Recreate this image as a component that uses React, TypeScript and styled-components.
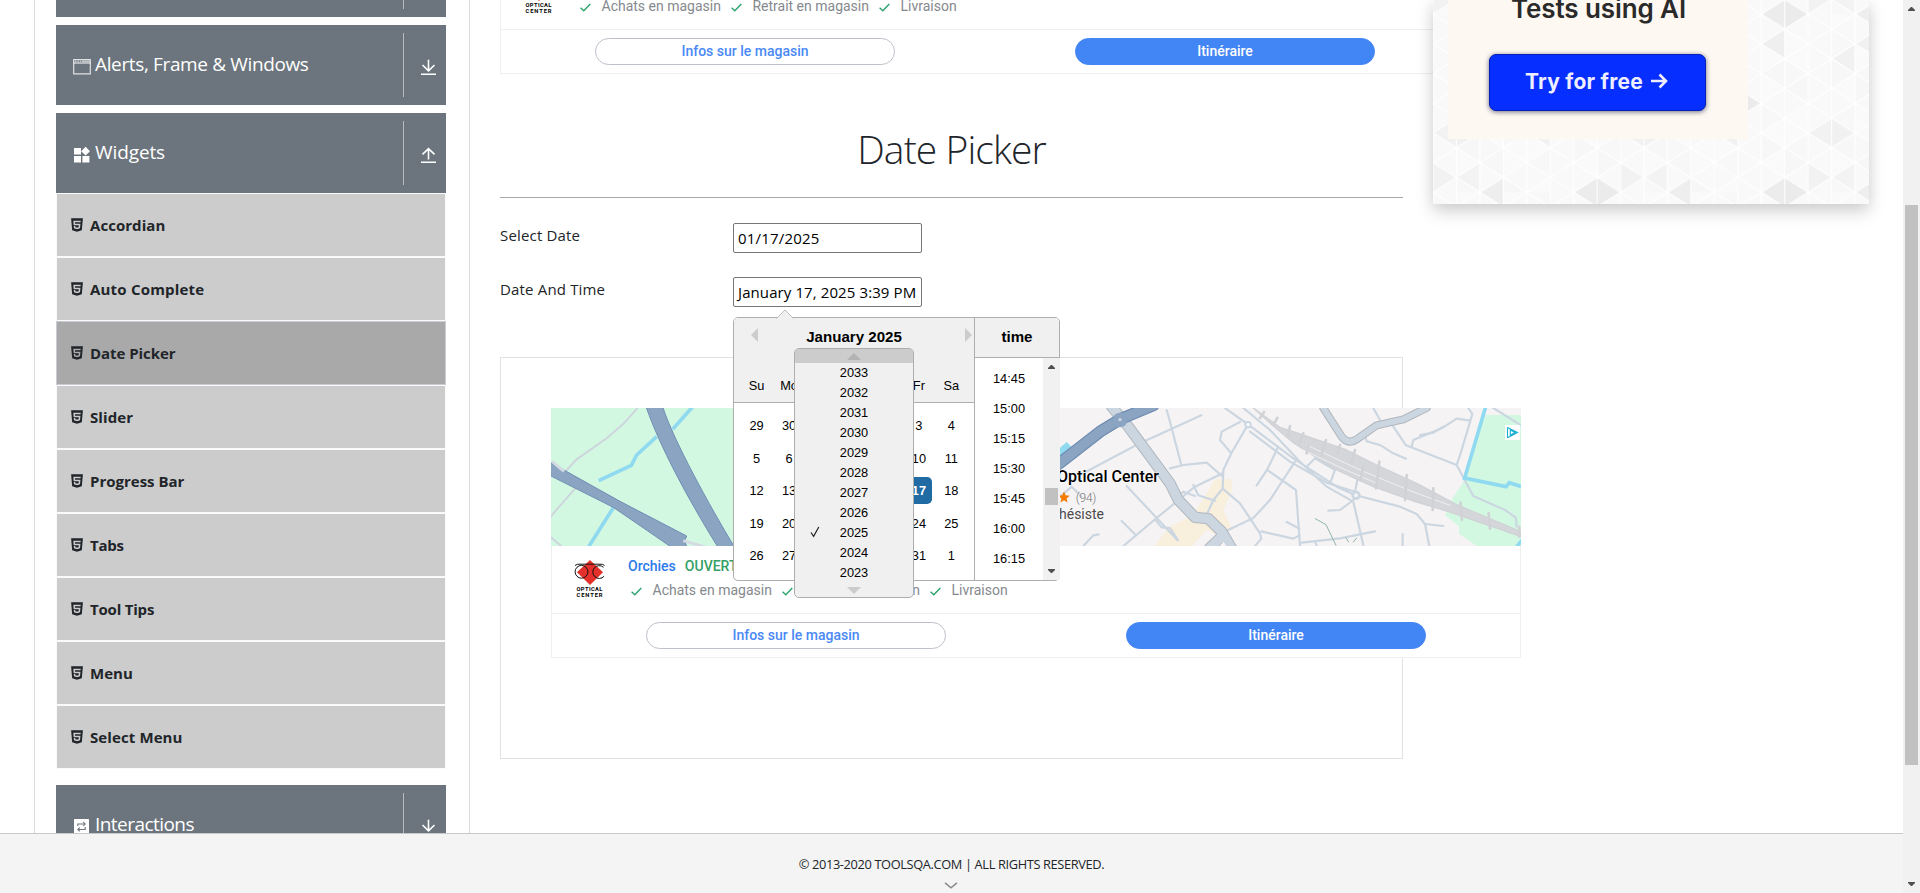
import React from "react";
import styled, { createGlobalStyle } from "styled-components";

const GlobalStyle = createGlobalStyle`
  * { box-sizing: border-box; }
  body { margin: 0; background: #fff; color: #212529; font-family: "Open Sans", "Noto Sans", sans-serif; overflow: hidden; }
`;

const Screen = styled.div`display: flex; width: 1920px; height: 893px; overflow: hidden;`;
const Page = styled.div`display: flex; flex-direction: column; width: 1903px; height: 893px;`;
const Content = styled.div`display: flex; height: 833px; overflow: hidden;`;

/* ---------- window scroll bar ---------- */
const Bar = styled.div<{ $pad: number }>`
  display: flex; flex-direction: column; justify-content: space-between; align-items: center;
  width: 17px; padding: ${(p) => p.$pad}px 0; background: #f1f1f1; flex: none;
`;
const Thumb = styled.div<{ $h: number; $top: number }>`
  width: 13px; height: ${(p) => p.$h}px; margin: ${(p) => p.$top}px 0 auto; background: #c1c1c1;
`;
const Tip = styled.svg`display: block; width: 7px; height: 4px; fill: #505050; flex: none;`;
const TipUp = () => <Tip viewBox="0 0 7 4"><path d="M3 0h1l3 3v1H0V3z" /></Tip>;
const TipDown = () => <Tip viewBox="0 0 7 4"><path d="M0 0h7v1L4 4H3L0 1z" /></Tip>;

/* ---------- left navigation ---------- */
const Sidebar = styled.nav`
  width: 436px; margin-left: 34px; padding: 0 23px 0 21px; flex: none;
  border: solid #dcdcdc; border-width: 0 1px;
`;
const GroupHeader = styled.div<{ $mt: number }>`
  display: flex; align-items: center; height: 80px; margin-top: ${(p) => p.$mt}px;
  padding-left: 17px; background: #6c757d; color: #fff;
`;
const GroupIcon = styled.svg`width: 18px; height: 18px; margin: 3px 4px 0 0; display: block;`;
const GroupName = styled.span<{ $ls: number }>`
  flex: 1; font-size: 19px; line-height: 30px; margin-top: -2px; letter-spacing: ${(p) => p.$ls}px;
`;
const Toggle = styled.div`
  display: flex; justify-content: center; align-items: center; height: 64px; width: 43px;
  border-left: 1px solid #b6bbbf; padding: 4px 0 0 6px;
`;
const ToggleIcon = styled.svg`width: 15px; height: 16px; fill: none; stroke: #fff; stroke-width: 1.6;`;
const List = styled.ul`list-style: none; margin: 0; padding: 0;`;
const Item = styled.li<{ $active?: boolean }>`
  display: flex; align-items: center; height: 64px; padding-left: 11px;
  border: 1px solid ${(p) => (p.$active ? "#c9ccd2" : "#fafafa")};
  background: ${(p) => (p.$active ? "#a9a9a9" : "#ccc")};
`;
const ItemIcon = styled.svg`width: 18px; height: 18px; fill: #212529; margin-right: 4px; display: block;`;
const ItemName = styled.span<{ $ls: number }>`
  font-size: 15px; font-weight: 700; line-height: 24px; letter-spacing: ${(p) => p.$ls}px;
`;

const Html5 = () => (
  <ItemIcon viewBox="0 0 24 24">
    <path fillRule="evenodd" d="M4.136 3.012h15.729l-1.431 16.15-6.451 1.826-6.414-1.826zm5.266 7.302-.173-1.963 7.581.002.173-1.973-9.931-.002.522 5.909h6.835l-.243 2.566-2.179.602-2.214-.605-.141-1.58H7.67l.248 3.123L12 17.506l4.017-1.113.552-6.079z" />
  </ItemIcon>
);
const WindowIcon = () => (
  <GroupIcon viewBox="0 0 18 18">
    <path d="M.7 1.700h16.600v14.100H.7z" fill="none" stroke="#dfe1e3" strokeWidth="1.200" />
    <path d="M.5 5h17" stroke="#fff" strokeWidth="1" />
    <path d="M2 3.200h1.400M4.400 3.200h1.400M6.800 3.200h1.400M9 3.200h8" stroke="#c5c9cc" strokeWidth="1.600" />
  </GroupIcon>
);
const WidgetsIcon = () => (
  <GroupIcon viewBox="0 0 18 18" fill="#fff">
    <path d="M1 2h7v6.600H1zM1 10h7v6.600H1zM9.400 10h7v6.600h-7zM12.600.8l4.400 4.400-4.400 4.400-4.400-4.400z" />
  </GroupIcon>
);
const RepeatIcon = () => (
  <GroupIcon viewBox="0 0 18 18">
    <rect x="1" y="1" width="15" height="15" rx=".6" fill="#fff" />
    <g fill="none" stroke="#6c757d" strokeWidth="1.100">
      <path d="M4.800 8V6h6.600M12.200 9v2.500H5.600" />
      <path d="M10.200 4.200l2 1.800-2 1.800M6.800 9.700l-2 1.800 2 1.800" />
    </g>
  </GroupIcon>
);
const DownIcon = () => <ToggleIcon viewBox="0 0 15 16"><path d="M7.500.8v11M1.500 6l6 5.800 6-5.800M0 15.200h15" /></ToggleIcon>;
const UpIcon = () => <ToggleIcon viewBox="0 0 15 16"><path d="M7.500 12.400V1.700M1.500 7.400l6-5.800 6 5.800M0 15.200h15" /></ToggleIcon>;

/* ---------- main column ---------- */
const Main = styled.main`width: 903px; margin-left: 30px; flex: none;`;
const TopAd = styled.div`margin-top: -176px; height: 250px;`;
const Title = styled.h1`
  margin: 42px 0 0; height: 81px; line-height: 66px; text-align: center; font-size: 39px; font-weight: 300;
  letter-spacing: -0.9px;
`;
const Rule = styled.hr`margin: 0 0 25px; border: 0; border-top: 1px solid #a8a8a8;`;
const Field = styled.div`display: flex; height: 30px; margin-bottom: 24px;`;
const Label = styled.label`width: 233px; font-size: 15px; line-height: 25px; letter-spacing: 0.170px;`;
const InputWrap = styled.div`position: relative;`;
const Input = styled.div<{ $ls: number }>`
  width: 189px; height: 30px; border: 1px solid #767676; border-radius: 2px; padding-left: 4px;
  font-size: 15px; line-height: 29px; color: #000; white-space: nowrap; background: #fff; letter-spacing: ${(p) => p.$ls}px;
`;
const Frame = styled.div`height: 402px; margin-top: 50px; padding: 50px 0 0 50px; border: 1px solid #e2e2e2;`;

/* ---------- store advert ---------- */
const Advert = styled.section`
  position: relative; width: 970px; height: 250px; font-family: Roboto, sans-serif; font-size: 14px; background: #fff;
`;
const MapArea = styled.div`position: relative; height: 138px;`;
const MapSvg = styled.svg`display: block; width: 970px; height: 138px;`;
const MapText = styled.div`
  position: absolute; left: 460px; top: 58px; width: 148px; display: flex; flex-direction: column; align-items: flex-end;
`;
const StoreName = styled.div`font-size: 16px; font-weight: 500; line-height: 22px; color: #000; text-shadow: 0 0 2px #fff, 0 0 2px #fff;`;
const Rating = styled.div`
  display: flex; align-items: center; gap: 6px; margin-right: 63px; height: 18px; font-size: 12.500px; font-weight: 300; color: #777;
  letter-spacing: -0.4px; text-shadow: 0 0 2px #fff;
`;
const Kind = styled.div`line-height: 17px; margin-right: 55px; color: #4a4a4a; white-space: nowrap; text-shadow: 0 0 2px #fff;`;
const Badge = styled.svg`position: absolute; right: 1px; top: 17px; width: 15px; height: 15px;`;
const Info = styled.div`display: flex; height: 67px; border: solid #efefef; border-width: 0 1px; padding: 13px 0 0 22px;`;
const LogoBox = styled.svg`width: 31px; height: 38px; margin: 1px 23px 0 0; flex: none;`;
const InfoText = styled.div`display: flex; flex-direction: column;`;
const StatusLine = styled.div`display: flex; gap: 9px; line-height: 14px; font-weight: 500; margin-bottom: 10px;`;
const City = styled.span`color: #2c7bea;`;
const Open = styled.span`color: #34a065;`;
const Services = styled.div`display: flex; align-items: center; line-height: 14px; color: #85898e; padding-left: 3px;`;
const Service = styled.span`display: flex; align-items: center; gap: 10.500px; margin-right: 10px; white-space: nowrap;`;
const Tick = styled.svg`width: 11px; height: 9px; margin-top: 2px; fill: none; stroke: #2ba36f; stroke-width: 1.400;`;
const Actions = styled.div`
  display: grid; grid-template-columns: 490px 478px; height: 45px; border: 1px solid #efefef; padding-top: 8px;
`;
const Pill = styled.div<{ $solid?: boolean }>`
  width: 300px; height: 27px; margin-left: ${(p) => (p.$solid ? 84 : 94)}px; border-radius: 14px; text-align: center;
  border: 1px solid ${(p) => (p.$solid ? "#4285f4" : "#bdc1c9")}; line-height: 25px;
  color: ${(p) => (p.$solid ? "#fff" : "#4a89f5")}; background: ${(p) => (p.$solid ? "#4285f4" : "#fff")};
  font-weight: 500;
`;

const StoreMap = () => (
  <MapSvg viewBox="0 0 970 138">
    <rect width="970" height="138" fill="#f5f3f4" />
    <rect width="330" height="138" fill="#d3f8e2" />
    <g transform="scale(.33333) translate(-213 -204)" fill="none">
      <path d="M474 202L432 250 380 295 290 358 255 396M290 440L210 532M208 588L246 620" stroke="#cdd5dd" strokeWidth="6" />
      <path d="M640 198L578 268M530 290L470 345 454 376 356 422M402 500L326 620" stroke="#8fdaf0" strokeWidth="11" strokeLinejoin="round" />
      <path d="M498 200C540 320 620 470 714 622L764 622C690 500 580 300 548 200z" fill="#8aa4c2" stroke="#6f8db3" strokeWidth="3" />
      <path d="M205 364L420 484 620 588 615 600 620 622 575 622 400 502 205 404z" fill="#8aa4c2" stroke="#6f8db3" strokeWidth="3" />
      <path d="M216 364L252 394M610 602L680 622" stroke="#d3dae2" strokeWidth="9" />
    </g>
    <g transform="translate(489 -18) scale(.33333)" fill="none" strokeLinejoin="round" strokeLinecap="round">
      <path d="M525 268L576 268 574 305 550 360 575 415 540 440 500 420 455 470 340 470 390 410 460 375z" fill="#f8efdc" stroke="none" />
      <path d="M1335 75H1445V468H1310L1258 432 1256 408 1215 376 1240 320 1268 280z" fill="#d3f8e2" stroke="none" />
      <path d="M55 178L80 156 100 176 60 210z" fill="#8fdaf0" stroke="none" />
      <g stroke="#cbd6e1" strokeWidth="6.500">
        <path d="M380 60L390 95 424 226M120 255L295 162 484 76M60 320L95 290 125 320" />
        <path d="M600 96L545 125 540 150 574 190M620 110L574 190 550 240 548 296 520 330 500 374" />
        <path d="M390 235L430 225 500 218 546 258M548 250L465 290 350 384 250 468M415 320L430 305 465 318M460 285L475 316 525 332" />
        <path d="M260 288L412 450M245 393L288 436M345 388L365 412 390 414 414 450M130 468L160 436 176 433" />
        <path d="M548 296L600 340 660 430 664 446 645 468M714 172L682 238 650 286M682 240L768 300 780 468M560 422L640 384 690 330 765 215" />
        <path d="M555 54L625 104 760 205 890 290 945 315 1080 350 1130 372 1155 402 1168 468M610 54L690 120 780 215 860 290 940 335 970 466" />
        <path d="M630 125L750 215 860 278 945 305 960 230M800 230L825 205 885 240 870 280M1155 402L1210 408M865 362L900 360 940 330" />
        <path d="M664 424L760 446 778 436M740 396L778 416M785 458L900 445 1005 424M825 455L830 466M1088 432V468" />
        <path d="M1000 54L1020 90M1056 104L1098 166 1250 225 1300 318 1395 360 1428 384 1430 410M1115 170L1120 150 1205 115 1250 86 1290 92M1285 54L1297 72 1265 180 1250 225" />
        <path d="M976 140L980 154 1022 166 1060 190 1098 206M1360 54L1440 104M1140 135L1180 128 1210 110" />
      </g>
      <circle cx="624" cy="104" r="8" fill="#fff" stroke="#cbd6e1" strokeWidth="6" />
      <circle cx="948" cy="316" r="10" fill="#f5f3f4" stroke="#cbd6e1" strokeWidth="8" />
      <g stroke="#d0d2d6">
        <path d="M640 54L720 112 780 132 920 180 1010 225 1130 280 1250 344 1445 426V440L1230 366 1130 336 1000 290 880 235 760 158 700 108z" fill="#d4d6da" strokeWidth="4" />
        <path d="M800 165L960 240 1120 306 1230 346M790 180L900 232 1010 280" stroke="#f0eff1" strokeWidth="3" />
        <path d="M672 66L660 84M712 84L700 104M750 108L744 136M790 130L778 160M858 150L845 190M805 165L800 190M900 165L892 190M945 180L935 215M1018 215L1008 295M970 230L962 268M1100 255L1095 330M1180 295L1178 360M1262 338L1266 390M1346 370L1350 416M1438 410V440" strokeWidth="8" />
      </g>
      <path d="M850 54L905 140Q925 165 950 148L1010 106 1090 88 1160 54" stroke="#b1b7bd" strokeWidth="24" />
      <path d="M850 54L905 140Q925 165 950 148L1010 106 1090 88 1160 54" stroke="#cbd6e1" strokeWidth="18" />
      <path d="M215 50L240 80 265 110 390 280 415 330 465 382 505 386 545 425 575 475M550 435L508 475" stroke="#b1b7bd" strokeWidth="34" />
      <path d="M215 50L240 80 265 110 390 280 415 330 465 382 505 386 545 425 575 475M550 435L508 475" stroke="#cbd6e1" strokeWidth="28" />
      <path d="M550 455L538 470H560z" fill="#f5f3f4" stroke="none" />
      <path d="M20 250L180 125 240 88 340 46" stroke="#6c8ab0" strokeWidth="36" />
      <path d="M20 250L180 125 240 88 340 46" stroke="#8aa4c2" strokeWidth="29" />
      <circle cx="240" cy="90" r="22" fill="#8aa4c2" />
      <circle cx="240" cy="89" r="5" fill="#cbd6e1" />
      <path d="M1336 54L1274 264 1398 290 1408 278 1445 290M1432 468L1445 452" stroke="#8fdaf0" strokeWidth="11" strokeLinejoin="miter" />
      <path d="M826 386L858 404 888 466M918 444L926 456M940 456L950 444" stroke="#8fb5a6" strokeWidth="3" />
    </g>
  </MapSvg>
);

const OpticalLogo = () => (
  <LogoBox viewBox="0 0 31 38">
    <path d="M16 0L29 12.300 16 25 3 12.300z" fill="#e3302b" />
    <g fill="none" stroke="#111" strokeWidth="1">
      <path d="M1 5.500Q3 3.800 6 4.200H25Q29 3.800 30.500 5.500" />
      <circle cx="7.500" cy="11.800" r="6.400" />
      <path d="M29.500 7.300A6.400 6.400 0 1 0 30 16.300" />
    </g>
    <g fontFamily="Roboto, sans-serif" fontWeight="700" fontSize="5.800" fill="#000">
      <text x="2.500" y="30.600" textLength="26" lengthAdjust="spacing">OPTICAL</text>
      <text x="2.500" y="36.800" textLength="26" lengthAdjust="spacing">CENTER</text>
    </g>
  </LogoBox>
);

const StoreAdvert = () => (
  <Advert>
    <MapArea>
      <StoreMap />
      <MapText>
        <StoreName>Optical Center</StoreName>
        <Rating>
          <svg width="12" height="12" viewBox="0 0 24 24" fill="#f57c00"><path d="M12 1l3.200 7.700 8.300.7-6.300 5.400 1.900 8.200L12 18.600 4.900 23l1.900-8.200L.5 9.400l8.300-.7z" /></svg>
          (94)
        </Rating>
        <Kind>Audioprothésiste</Kind>
      </MapText>
      <Badge viewBox="0 0 15 15">
        <rect width="15" height="15" fill="#fff" />
        <path d="M2.500 2.200V13M2.500 2.500L12.500 7.500 3 12.500M5.300 5v5.200L10 7.500z" fill="none" stroke="#18b0cf" strokeWidth="1.100" />
      </Badge>
    </MapArea>
    <Info>
      <OpticalLogo />
      <InfoText>
        <StatusLine><City>Orchies</City><Open>OUVERT</Open></StatusLine>
        <Services>
          {["Achats en magasin", "Retrait en magasin", "Livraison"].map((s) => (
            <Service key={s}><Tick viewBox="0 0 11 9"><path d="M.6 4.800L3.800 7.800 10.300 1" /></Tick>{s}</Service>
          ))}
        </Services>
      </InfoText>
    </Info>
    <Actions><Pill>Infos sur le magasin</Pill><Pill $solid>Itinéraire</Pill></Actions>
  </Advert>
);

/* ---------- date and time popup ---------- */
const Popup = styled.div`
  position: absolute; z-index: 5; left: 0; top: 40px; width: 327px; height: 264px; display: flex;
  border: 1px solid #aeaeae; border-radius: 5px; background: #fff; color: #000;
  font-family: "Liberation Sans", Arial, sans-serif; font-size: 12.800px;
`;
const Notch = styled.svg`position: absolute; left: 42px; top: -9px; width: 18px; height: 10px;`;
const Month = styled.div`width: 240px;`;
const MonthHead = styled.div`
  display: flex; flex-direction: column; justify-content: space-between; height: 85px; padding: 8px 0 0;
  background: #f0f0f0; border-bottom: 1px solid #aeaeae; border-top-left-radius: 4px;
`;
const MonthNav = styled.div`display: flex; align-items: center; height: 22px; padding: 0 2px 0 17px;`;
const Arrow = styled.svg`width: 7px; height: 14px; fill: #ccc; margin-bottom: 4px;`;
const Heading = styled.div`flex: 1; padding-right: 15px; margin-top: -2px; text-align: center; font-weight: 700; font-size: 15.100px;`;
const Week = styled.div`display: flex; margin: 0 6.400px;`;
const Weeks = styled.div`padding-top: 6.400px;`;
const Day = styled.div<{ $on?: boolean; $head?: boolean }>`
  width: 27.200px; height: 27.200px; line-height: 27.200px; text-align: center; margin: ${(p) => (p.$head ? "0 2.66px 2.66px" : "2.66px")};
  border-radius: 4.800px; background: ${(p) => (p.$on ? "#216ba5" : "transparent")}; color: ${(p) => (p.$on ? "#fff" : "#000")};
  font-weight: ${(p) => (p.$on ? 700 : 400)};
`;
const Time = styled.div`width: 86px; border-left: 1px solid #aeaeae; display: flex; flex-direction: column;`;
const TimeHead = styled.div`
  height: 40px; line-height: 38px; text-align: center; font-weight: 700; font-size: 15.100px;
  background: #f0f0f0; border-bottom: 1px solid #aeaeae; border-top-right-radius: 4px;
`;
const TimeBody = styled.div`display: flex; flex: 1; margin-right: -1px;`;
const TimeList = styled.div`flex: 1; padding-top: 6px; text-align: center; line-height: 30px;`;
const YearMenu = styled.div`
  position: absolute; left: 60px; top: 30px; width: 120px; height: 250px; z-index: 1; text-align: center; line-height: 20px;
  background: #f0f0f0; border: 1px solid #aeaeae; border-radius: 5px; overflow: hidden;
`;
const YearMore = styled.div<{ $hover?: boolean }>`
  display: flex; justify-content: center; align-items: center; height: 14px; background: ${(p) => (p.$hover ? "#ccc" : "transparent")};
`;
const Year = styled.div`position: relative; height: 20px;`;
const YearCheck = styled.svg`position: absolute; left: 15px; top: 3px; width: 10px; height: 12px;`;

const weeks = [
  [29, 30, 31, 1, 2, 3, 4], [5, 6, 7, 8, 9, 10, 11], [12, 13, 14, 15, 16, 17, 18],
  [19, 20, 21, 22, 23, 24, 25], [26, 27, 28, 29, 30, 31, 1],
];

const DateTimePopup = () => (
  <Popup>
    <Notch viewBox="0 0 18 10"><path d="M.5 9.500L9 1l8.500 8.500" fill="#f0f0f0" stroke="#bdbdbd" /><path d="M1 9.500h16V10H1z" fill="#f0f0f0" /></Notch>
    <Month>
      <MonthHead>
        <MonthNav>
          <Arrow viewBox="0 0 7 14"><path d="M7 0v14L0 7z" /></Arrow>
          <Heading>January 2025</Heading>
          <Arrow viewBox="0 0 7 14"><path d="M0 0v14L7 7z" /></Arrow>
        </MonthNav>
        <Week>{["Su", "Mo", "Tu", "We", "Th", "Fr", "Sa"].map((d) => <Day $head key={d}>{d}</Day>)}</Week>
      </MonthHead>
      <Weeks>
        {weeks.map((w, i) => <Week key={i}>{w.map((d, j) => <Day key={j} $on={i === 2 && d === 17}>{d}</Day>)}</Week>)}
      </Weeks>
    </Month>
    <Time>
      <TimeHead>time</TimeHead>
      <TimeBody>
        <TimeList>{["14:45", "15:00", "15:15", "15:30", "15:45", "16:00", "16:15"].map((t) => <div key={t}>{t}</div>)}</TimeList>
        <Bar $pad={7}><TipUp /><Thumb $h={17} $top={119} /><TipDown /></Bar>
      </TimeBody>
    </Time>
    <YearMenu>
      <YearMore $hover><svg width="14" height="7"><path d="M0 7L7 0l7 7z" fill="#b3b3b3" /></svg></YearMore>
      {[2033, 2032, 2031, 2030, 2029, 2028, 2027, 2026, 2025, 2024, 2023].map((y) => (
        <Year key={y}>
          {y === 2025 && <YearCheck viewBox="0 0 10 12"><path d="M1 6.500L3.600 10.300 8.800 1" fill="none" stroke="#222" strokeWidth="1.200" /></YearCheck>}
          {y}
        </Year>
      ))}
      <YearMore><svg width="14" height="7"><path d="M0 0h14L7 7z" fill="#ccc" /></svg></YearMore>
    </YearMenu>
  </Popup>
);

/* ---------- right column promotion ---------- */
const Promo = styled.aside`
  position: relative; width: 436px; height: 204px; margin-left: 30px; flex: none; padding-left: 15px;
  box-shadow: 0 8px 16px rgba(0, 0, 0, 0.17), 0 0 14px rgba(0, 0, 0, 0.06); background: #fbfbfb;
`;
const PromoPattern = styled.svg`position: absolute; left: 0; top: 0; width: 436px; height: 204px;`;
const PromoCard = styled.div`
  position: relative; width: 300px; height: 139px; background: #fdf8f1; font-family: Inter, sans-serif; overflow: hidden;
  display: flex; flex-direction: column; align-items: center; padding-right: 2px;
`;
const PromoText = styled.div`
  font-size: 26px; font-weight: 600; line-height: 32px; margin-top: -7px; height: 61px; color: #2a2a2a; letter-spacing: -0.1px;
  padding-left: 3px;
`;
const PromoButton = styled.div`
  display: flex; align-items: center; justify-content: center; gap: 8px; width: 217px; height: 57px; border-radius: 7px;
  background: #062efe; border: 1px solid #0420b8; box-shadow: 0 1px 5px rgba(20, 20, 60, 0.6); color: #eeeeff;
  font-size: 21px; font-weight: 700; letter-spacing: 0.250px; padding: 0 1px 3px 0;
`;

const CW = 23.45;
const CH = 29.67;
/* [column, row centre in half cells, tip side, shade] */
const shaded: [number, number, string, string][] = [
  [6, 0, "L", "#ececec"], [7, 0, "R", "#ebebeb"], [2, 0, "L", "#eeeeee"], [0, 11, "R", "#f2f2f2"], [1, 11, "L", "#f3f3f3"],
  [0, 8, "L", "#f2f2f2"], [1, 8, "R", "#f1f1f1"], [6, 2, "L", "#efefef"], [2, 2, "L", "#f1f1f1"], [1, 3, "L", "#f1f1f1"],
  [5, 6, "R", "#ebebeb"], [4, 8, "L", "#f1f1f1"],
];
const TrianglePattern = () => {
  const tris: React.ReactNode[] = [];
  for (let k = 0; k < 8; k++) {
    for (let h = -1; h < 13; h++) {
      const side = (k + h) % 2 === 0 ? "L" : "R";
      const n = (k * 7 + (((h + 12) % 12) * 5) + k * (h + 12)) % 5;
      const hit = shaded.find((s) => s[0] === k && s[1] === (h + 12) % 12 && s[2] === side);
      const y = (h * CH) / 2;
      const x0 = k * CW;
      const x1 = x0 + CW;
      const pts = side === "L"
        ? `${x0},${y} ${x1},${y - CH / 2} ${x1},${y + CH / 2}`
        : `${x1},${y} ${x0},${y - CH / 2} ${x0},${y + CH / 2}`;
      tris.push(<polygon key={`${k}-${h}`} points={pts} fill={hit ? hit[3] : ["#f9f9f9", "#f8f8f8", "#fafafa", "#f7f7f7", "#fafafa"][n]} />);
    }
  }
  return (
    <PromoPattern viewBox="0 0 436 204">
      <defs>
        <pattern id="tri" width={CW * 8} height={CH * 6} x="0" y="14.300" patternUnits="userSpaceOnUse">
          <g stroke="#fff" strokeWidth="1">{tris}</g>
        </pattern>
      </defs>
      <rect width="436" height="204" fill="url(#tri)" />
    </PromoPattern>
  );
};

const Footer = styled.footer`
  display: flex; flex-direction: column; align-items: center; height: 60px; padding-top: 19px;
  background: #f4f4f4; border-top: 1px solid #c8c8c8; font-size: 12.800px; line-height: 22px;
`;
const Copyright = styled.span`letter-spacing: -0.360px;`;
const Chevron = styled.svg`width: 14px; height: 7px; margin: 7px 2px 0 0; fill: none; stroke: #8a8a8a; stroke-width: 1.500;`;

const items: [string, number][] = [
  ["Accordian", 0.05], ["Auto Complete", 0.2], ["Date Picker", -0.05], ["Slider", 0.1], ["Progress Bar", 0],
  ["Tabs", -0.25], ["Tool Tips", -0.2], ["Menu", 0.05], ["Select Menu", 0.1],
];

export default function App() {
  return (
    <Screen>
      <GlobalStyle />
      <Page>
        <Content>
          <Sidebar>
            <GroupHeader $mt={-63}><GroupName $ls={0} /><Toggle /></GroupHeader>
            <GroupHeader $mt={8}><WindowIcon /><GroupName $ls={-0.36}>Alerts, Frame &amp; Windows</GroupName><Toggle><DownIcon /></Toggle></GroupHeader>
            <GroupHeader $mt={8}><WidgetsIcon /><GroupName $ls={-0.1}>Widgets</GroupName><Toggle><UpIcon /></Toggle></GroupHeader>
            <List>
              {items.map(([name, ls]) => (
                <Item key={name} $active={name === "Date Picker"}><Html5 /><ItemName $ls={ls}>{name}</ItemName></Item>
              ))}
            </List>
            <GroupHeader $mt={16}><RepeatIcon /><GroupName $ls={-0.55}>Interactions</GroupName><Toggle><DownIcon /></Toggle></GroupHeader>
          </Sidebar>
          <Main>
            <TopAd><StoreAdvert /></TopAd>
            <Title>Date Picker</Title>
            <Rule />
            <Field><Label>Select Date</Label><Input $ls={0.2}>01/17/2025</Input></Field>
            <Field>
              <Label>Date And Time</Label>
              <InputWrap><Input $ls={0.1}>January 17, 2025 3:39 PM</Input><DateTimePopup /></InputWrap>
            </Field>
            <Frame><StoreAdvert /></Frame>
          </Main>
          <Promo>
            <TrianglePattern />
            <PromoCard>
              <PromoText>Tests using AI</PromoText>
              <PromoButton>
                Try for free
                <svg width="17" height="16" viewBox="0 0 17 16" fill="none" stroke="#eeeeff" strokeWidth="2.600"><path d="M0 8h15M8.500 1.500L15 8l-6.500 6.500" /></svg>
              </PromoButton>
            </PromoCard>
          </Promo>
        </Content>
        <Footer>
          <Copyright>© 2013-2020 TOOLSQA.COM | ALL RIGHTS RESERVED.</Copyright>
          <Chevron viewBox="0 0 14 7"><path d="M1 .8l6 5 6-5" /></Chevron>
        </Footer>
      </Page>
      <Bar $pad={7}><TipUp /><Thumb $h={560} $top={194} /><TipDown /></Bar>
    </Screen>
  );
}
